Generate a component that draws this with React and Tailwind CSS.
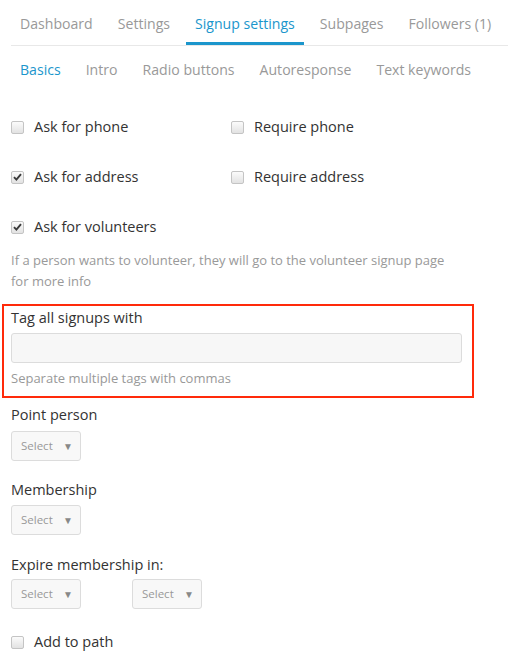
import React from 'react';

const tabs = ['Dashboard', 'Settings', 'Signup settings', 'Subpages', 'Followers (1)'];
const subtabs = ['Basics', 'Intro', 'Radio buttons', 'Autoresponse', 'Text keywords'];

const Check = ({ checked }) => (
  <span className="w-[13px] h-[13px] rounded-[2px] border border-[#c4c4c4] bg-gradient-to-b from-[#fbfbfb] to-[#e2e2e2] flex items-center justify-center shrink-0">
    {checked && (
      <svg width="9" height="8" viewBox="0 0 9 8">
        <path d="M1 4.2 L3.4 6.6 L8 1.2" fill="none" stroke="#3a3a3a" strokeWidth="1.9" />
      </svg>
    )}
  </span>
);

const CheckRow = ({ label, checked }) => (
  <label className="flex items-center gap-[10px] h-[22px]">
    <Check checked={checked} />
    <span>{label}</span>
  </label>
);

const Select = () => (
  <div className="w-[70px] h-[30px] border border-[#dcdcdc] bg-[#f8f8f8] rounded-[3px] flex items-center justify-between pl-[9px] pr-[7px] text-[11.5px] text-[#999]">
    <span>Select</span>
    <span className="text-[10px] text-[#888]">▼</span>
  </div>
);

export default function App() {
  return (
    <div className="w-[508px] h-[662px] overflow-hidden bg-white text-[#333] text-[14.5px] leading-[22px] font-['Open_Sans',sans-serif]">
      {/* Main tabs */}
      <nav className="ml-[11px] flex gap-[7px] border-b border-[#e8e8e8] text-[14.1px]">
        {tabs.map((t, i) => (
          <div
            key={t}
            className={`px-[9px] pt-[13px] pb-[7px] border-b-[3px] whitespace-nowrap ${i === 2 ? 'border-[#1b96cc] text-[#1b96cc]' : 'border-transparent text-[#999]'}`}
          >
            {t}
          </div>
        ))}
      </nav>

      {/* Sub tabs */}
      <div className="ml-[11px] mt-[13px] flex gap-[7px] text-[14.1px]">
        {subtabs.map((t, i) => (
          <div key={t} className={`px-[9px] whitespace-nowrap ${i === 0 ? 'text-[#1b96cc]' : 'text-[#999]'}`}>
            {t}
          </div>
        ))}
      </div>

      <div className="pl-[11px] mt-[35px]">
        <div className="grid grid-cols-[220px_1fr] gap-y-[28px]">
          <CheckRow label="Ask for phone" />
          <CheckRow label="Require phone" />
          <CheckRow label="Ask for address" checked />
          <CheckRow label="Require address" />
          <CheckRow label="Ask for volunteers" checked />
        </div>

        <p className="mt-[12px] text-[13px] leading-[21px] text-[#999] w-[450px]">
          If a person wants to volunteer, they will go to the volunteer signup page for more info
        </p>

        {/* Highlighted tag block */}
        <div className="ml-[-9px] mt-[12px] w-[472px] border-2 border-[#ff2a0a] pl-[7px] pr-[10px] pt-[1px] pb-[7px]">
          <div>Tag all signups with</div>
          <div className="mt-[4px] h-[30px] border border-[#dcdcdc] bg-[#f7f7f7] rounded-[3px]" />
          <div className="mt-[5px] text-[13px] leading-[21px] text-[#999]">Separate multiple tags with commas</div>
        </div>

        <div className="mt-[6px]">Point person</div>
        <div className="mt-[5px]"><Select /></div>

        <div className="mt-[18px]">Membership</div>
        <div className="mt-[4px]"><Select /></div>

        <div className="mt-[19px]">Expire membership in:</div>
        <div className="mt-[3px] flex gap-[51px]">
          <Select />
          <Select />
        </div>

        <div className="mt-[22px]">
          <CheckRow label="Add to path" />
        </div>
      </div>
    </div>
  );
}
